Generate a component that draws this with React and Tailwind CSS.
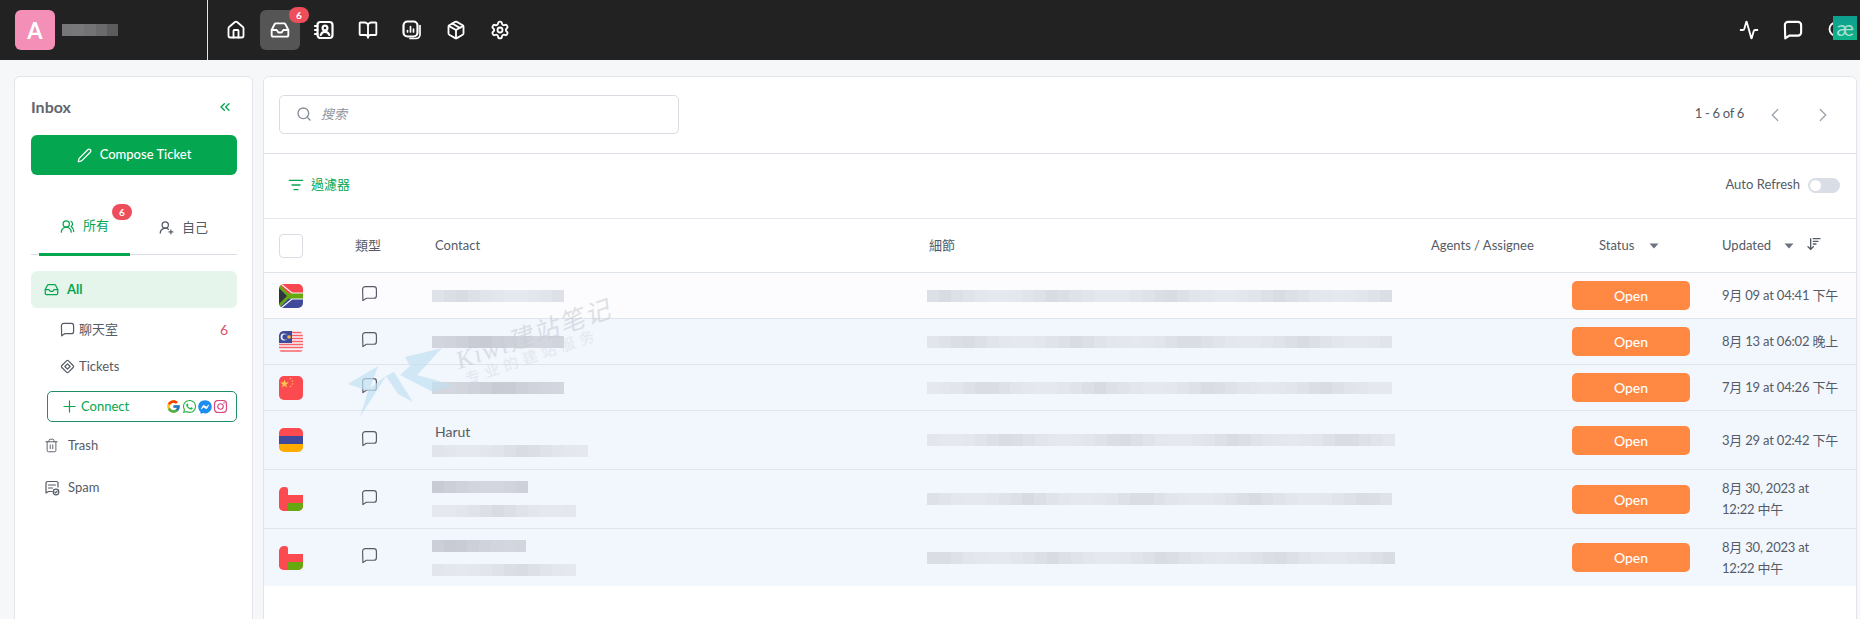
import {
  Activity, ArrowDownWideNarrow, BookOpen, ChevronLeft, ChevronRight, ChevronsLeft, House, Inbox,
  ListFilter, Package, Pen, Plus, Search, Settings, Trash2, UserRoundPlus, UsersRound,
} from 'lucide-react'
import { FaFacebookMessenger, FaInstagram, FaWhatsapp } from 'react-icons/fa'
import { FcGoogle } from 'react-icons/fc'

const ChatIcon = ({ size = 16, strokeWidth = 1.5 }) => (
  <svg width={size} height={size} viewBox="0 0 16 16" fill="none" stroke="currentColor" strokeWidth={strokeWidth} strokeLinejoin="round">
    <path d="M4 1.500h8a2.500 2.500 0 0 1 2.500 2.500v6a2.500 2.500 0 0 1-2.500 2.500H5L1.800 14.700 1.500 4A2.500 2.500 0 0 1 4 1.500z" />
  </svg>
)

const ContactIcon = () => (
  <svg width="20" height="20" viewBox="0 0 20 20" fill="none" stroke="currentColor" strokeWidth="2.200" strokeLinecap="round" strokeLinejoin="round">
    <rect x="3.500" y="2" width="15" height="16" rx="3" />
    <circle cx="11" cy="8" r="2.400" />
    <path d="M6.800 15c.6-2.200 2.200-3.200 4.200-3.200s3.600 1 4.200 3.200M1 6h2.500M1 10h2.500M1 14h2.500" />
  </svg>
)

const ReportIcon = () => (
  <svg width="20" height="20" viewBox="0 0 20 20" fill="none" stroke="currentColor" strokeWidth="2.200" strokeLinecap="round" strokeLinejoin="round">
    <rect x="1.500" y="1.500" width="14" height="15" rx="4" />
    <path d="M18 5.500v9a4 4 0 0 1-4 4H8M5.500 12v-1.500M8.500 12V6.500M11.500 12V9" strokeWidth="1.700" />
  </svg>
)

const TicketIcon = () => (
  <svg width="15" height="15" viewBox="0 0 16 16" fill="none" stroke="currentColor" strokeWidth="1.300" strokeLinejoin="round">
    <rect x="3" y="3" width="10" height="10" rx="1.500" transform="rotate(45 8 8)" />
    <rect x="6" y="6" width="4" height="4" transform="rotate(45 8 8)" />
  </svg>
)

const SpamIcon = () => (
  <svg width="16" height="16" viewBox="0 0 16 16" fill="none" stroke="currentColor" strokeWidth="1.200" strokeLinecap="round" strokeLinejoin="round">
    <path d="M8 11.500H4.500L2 13V3a1.500 1.500 0 0 1 1.500-1.500h9A1.500 1.500 0 0 1 14 3v4" />
    <path d="M4.500 5h7M4.500 8h4" />
    <circle cx="12" cy="12" r="2.800" />
    <path d="M10.800 12l.9.9 1.500-1.700" />
  </svg>
)

const Caret = () => (
  <svg width="10" height="6" viewBox="0 0 10 6" className="text-[#6b7280]" fill="currentColor">
    <path d="M0.500 0.500h9L5 5.500z" />
  </svg>
)

const flags = {
  za: (
    <svg viewBox="0 0 24 24" className="w-full h-full">
      <rect width="24" height="12" fill="#f9454d" />
      <rect y="12" width="24" height="12" fill="#3f4a9c" />
      <path d="M0 0l12 12L0 24z" fill="#66a80f" />
      <rect x="10" y="9" width="14" height="6" fill="#66a80f" />
      <path d="M0 4l8 8-8 8z" fill="#2f3640" />
      <path d="M2 0l11 9h11M2 24l11-9h11" stroke="#f4f5f7" strokeWidth="1.200" fill="none" />
    </svg>
  ),
  my: (
    <svg viewBox="0 0 24 22" className="w-full h-full">
      <rect width="24" height="22" fill="#f4f6fb" />
      <path d="M0 1.500h24M0 4.500h24M0 7.500h24M0 10.500h24M0 13.500h24M0 16.500h24M0 20h24" stroke="#f9646a" strokeWidth="1.600" />
      <rect width="13" height="12" fill="#3f4a9c" />
      <circle cx="5" cy="6" r="3.400" fill="#f4f5f7" />
      <circle cx="6.200" cy="6" r="2.800" fill="#3f4a9c" />
      <circle cx="10" cy="6" r="1.800" fill="#f6b73c" />
    </svg>
  ),
  cn: (
    <svg viewBox="0 0 24 24" className="w-full h-full">
      <rect width="24" height="24" fill="#fb4a50" />
      <path d="M5.500 3.500l1.100 3 3.100.1-2.500 1.900.9 3-2.600-1.800-2.600 1.800.9-3L1.300 6.600l3.100-.1z" fill="#f9c74f" />
      <g fill="#f9b15a">
        <circle cx="11.500" cy="2.500" r=".8" />
        <circle cx="13.500" cy="5" r=".8" />
        <circle cx="13.500" cy="8" r=".8" />
        <circle cx="11.500" cy="10.500" r=".8" />
      </g>
    </svg>
  ),
  am: (
    <svg viewBox="0 0 24 24" className="w-full h-full">
      <rect width="24" height="8" fill="#fb4a50" />
      <rect y="8" width="24" height="8" fill="#3f4a9c" />
      <rect y="16" width="24" height="8" fill="#ffab00" />
    </svg>
  ),
  om: (
    <svg viewBox="0 0 24 24" className="w-full h-full">
      <rect width="24" height="8" fill="#f2f6fd" />
      <rect width="24" height="24" y="8" fill="#fb4a50" />
      <rect x="9" y="16" width="15" height="8" fill="#66a80f" />
      <rect width="9" height="24" fill="#fb4a50" rx="3" />
    </svg>
  ),
}

// pixelated grey strip standing in for the redacted text
function Blur({ width, seed = 1, tone = 'light', className = '' }) {
  const base = { light: [216, 219, 226], mid: [198, 201, 209], dark: [70, 70, 72] }[tone]
  const cells = []
  for (let i = 0; i < Math.ceil(width / 12); i++) {
    const n = Math.round(Math.abs(Math.sin(seed * 37.1 + i * 12.9)) * (tone === 'dark' ? 50 : 13))
    cells.push(
      <span key={i} className="flex-1 h-full" style={{ backgroundColor: `rgb(${base[0] + n},${base[1] + n},${base[2] + n})` }} />,
    )
  }
  return <div className={`flex h-3 ${className}`} style={{ width }}>{cells}</div>
}

const rows = [
  { flag: 'za', h: 'h-[46px]', bg: 'bg-[#fcfcfe]', fh: 'h-6', contact: [[132, 'light']], detail: 465, date: ['9月 09 at 04:41 下午'] },
  { flag: 'my', h: 'h-[46px]', bg: 'bg-[#f2f6fd]', fh: 'h-[22px]', contact: [[132, 'mid']], detail: 465, date: ['8月 13 at 06:02 晚上'] },
  { flag: 'cn', h: 'h-[46px]', bg: 'bg-[#f2f6fd]', fh: 'h-6', contact: [[132, 'mid']], detail: 465, date: ['7月 19 at 04:26 下午'] },
  { flag: 'am', h: 'h-[59px]', bg: 'bg-[#f2f6fd]', fh: 'h-6', name: 'Harut', contact: [[156, 'light']], detail: 468, date: ['3月 29 at 02:42 下午'] },
  { flag: 'om', h: 'h-[59px]', bg: 'bg-[#f2f6fd]', fh: 'h-6', contact: [[96, 'mid'], [144, 'light']], detail: 465, date: ['8月 30, 2023 at', '12:22 中午'] },
  { flag: 'om', h: 'h-[57px]', bg: 'bg-[#f2f6fd]', fh: 'h-6', contact: [[94, 'mid'], [144, 'light']], detail: 468, date: ['8月 30, 2023 at', '12:22 中午'], last: true },
]

const navIcons = [
  <House size={20} strokeWidth={2.200} />,
  <Inbox size={20} strokeWidth={2.200} />,
  <ContactIcon />,
  <BookOpen size={20} strokeWidth={2.200} />,
  <ReportIcon />,
  <Package size={20} strokeWidth={2.200} />,
  <Settings size={20} strokeWidth={2.200} />,
]

const tableCols = 'grid grid-cols-[91px_77px_495px_504px_141px_150px_134px] items-center'

export default function App() {
  return (
    <div className="relative h-[619px] overflow-hidden bg-[#f6f7f9] font-['Lato','Noto_Sans_CJK_TC',sans-serif] text-[#555b66]">
      {/* Top bar */}
      <header className="flex h-[60px] bg-[#222222] text-white">
        <div className="flex w-[208px] items-center gap-[7px] border-r border-[#e5e5e5] pl-[15px]">
          <div className="flex h-10 w-10 items-center justify-center rounded-md bg-[#f48fb8] text-[22px] font-bold text-white">A</div>
          <Blur width={56} seed={3} tone="dark" />
        </div>
        <nav className="ml-[6px] flex items-center">
          {navIcons.map((icon, i) => (
            <div key={i} className="relative flex h-[60px] w-11 items-center justify-center">
              {i === 1 && <div className="absolute h-10 w-10 rounded-md bg-[#555555]" />}
              <span className="relative">{icon}</span>
              {i === 1 && (
                <span className="absolute left-[31px] top-[7px] flex h-4 w-5 items-center justify-center rounded-full bg-[#ee4d5b] text-[10px] font-bold text-white">6</span>
              )}
            </div>
          ))}
        </nav>
        <div className="ml-auto flex items-center pr-px">
          <div className="flex h-[60px] w-11 items-center justify-center"><Activity size={20} strokeWidth={2.200} /></div>
          <div className="flex h-[60px] w-11 items-center justify-center"><ChatIcon size={20} strokeWidth={1.700} /></div>
          <div className="flex h-[60px] w-11 items-center justify-center"><Search size={20} strokeWidth={2.200} /></div>
        </div>
      </header>

      <main className="flex h-[559px] gap-[10px] overflow-hidden pl-[14px] pr-[3px] pt-4">
        {/* Sidebar */}
        <aside className="h-[600px] w-[239px] shrink-0 rounded-t-md border border-[#e3e5ea] bg-white pl-[16px] pr-[15px] pt-[18px]">
          <div className="flex h-6 items-center justify-between">
            <span className="text-[16px] font-bold text-[#62666e]">Inbox</span>
            <ChevronsLeft size={16} className="mr-1 text-[#05a650]" />
          </div>
          <button className="mt-4 flex h-10 w-full items-center justify-center gap-2 rounded-md bg-[#05a650] text-[13px] font-medium text-white">
            <Pen size={15} />
            Compose Ticket
          </button>
          <div className="mt-[30px] flex h-[50px] border-b border-[#d9dce2] text-[13px]">
            <div className="relative ml-2 flex h-[51px] w-[91px] items-center justify-center gap-2 border-b-[3px] border-[#05a650] pb-[6px] text-[#05a650]">
              <UsersRound size={15} />
              所有
              <span className="absolute left-[73px] top-[-1px] flex h-4 w-5 items-center justify-center rounded-full bg-[#ee4d5b] text-[10px] font-bold text-white">6</span>
            </div>
            <div className="flex h-[50px] flex-1 items-center justify-center gap-2 pb-[5px]">
              <UserRoundPlus size={15} />
              自己
            </div>
          </div>
          <div className="mt-4 flex h-[37px] items-center gap-[8px] rounded-md bg-[#e6f5ec] pl-[13px] text-[13px] font-bold text-[#05a650]">
            <Inbox size={15} />
            All
          </div>
          <div className="mt-[3px] flex h-[37px] items-center gap-[4px] pl-[29px] pr-[9px] text-[13px]">
            <ChatIcon size={15} strokeWidth={1.300} />
            聊天室
            <span className="ml-auto text-[14px] text-[#d9506d]">6</span>
          </div>
          <div className="flex h-[37px] items-center gap-[4px] pl-[29px] text-[13px]">
            <TicketIcon />
            Tickets
          </div>
          <div className="ml-4 mt-[6px] flex h-[31px] items-center rounded-[5px] border border-[#1f8f63] pl-[12px] pr-[8px] text-[13px] text-[#05a650]">
            <Plus size={19} strokeWidth={1.500} />
            <span className="ml-[2px]">Connect</span>
            <div className="ml-auto flex items-center gap-px">
              <FcGoogle size={15} />
              <FaWhatsapp size={15} className="text-[#2bb24c]" />
              <FaFacebookMessenger size={14} className="text-[#1c8ef0]" />
              <FaInstagram size={15} className="text-[#d6457e]" />
            </div>
          </div>
          <div className="mt-[5px] flex h-[37px] items-center gap-[9px] pl-[13px] text-[13px]">
            <Trash2 size={15} strokeWidth={1.500} />
            Trash
          </div>
          <div className="mt-[5px] flex h-[37px] items-center gap-[8px] pl-[13px] text-[13px]">
            <SpamIcon />
            Spam
          </div>
        </aside>

        {/* Ticket list */}
        <section className="h-[600px] flex-1 rounded-t-md border border-[#e3e5ea] bg-white">
          <div className="flex h-[77px] items-center border-b border-[#dfe3ea] pb-[2px] pl-[15px] pr-[22px]">
            <div className="flex h-[39px] w-[400px] items-center gap-[9px] rounded-[5px] border border-[#d9dce2] pl-[16px]">
              <Search size={16} className="text-[#868c96]" />
              <span className="pt-px text-[13px] italic text-[#8d929b]">搜索</span>
            </div>
            <span className="ml-auto text-[13px] tracking-[-0.3px]">1 - 6 of 6</span>
            <ChevronLeft size={22} strokeWidth={1.300} className="ml-[20px] mt-[2px] text-[#9aa0aa]" />
            <ChevronRight size={22} strokeWidth={1.300} className="ml-[26px] mt-[2px] text-[#9aa0aa]" />
          </div>
          <div className="flex h-[65px] items-center border-b border-[#e3e6ec] pb-[2px] pl-6 pr-4">
            <ListFilter size={16} className="text-[#05a650]" />
            <span className="ml-[7px] text-[13px] text-[#05a650]">過濾器</span>
            <span className="ml-auto text-[13px]">Auto Refresh</span>
            <div className="ml-2 flex h-[15px] w-8 items-center rounded-full bg-[#d9dde6] pl-[2px]">
              <span className="h-[11px] w-[11px] rounded-full bg-white" />
            </div>
          </div>
          <div className={`${tableCols} h-[54px] border-b border-[#dfe3ea] text-[13px]`}>
            <div className="pl-[15px]"><div className="h-6 w-6 rounded border border-[#d9dce2]" /></div>
            <div>類型</div>
            <div className="pl-[3px]">Contact</div>
            <div className="pl-[2px]">細節</div>
            <div>Agents / Assignee</div>
            <div className="flex items-center pl-[27px]">Status<span className="ml-[15px]"><Caret /></span></div>
            <div className="flex items-center">
              Updated
              <span className="ml-[13px]"><Caret /></span>
              <ArrowDownWideNarrow size={16} className="ml-[12px] -mt-1" />
            </div>
          </div>
          {rows.map((r, i) => (
            <div key={i} className={`${tableCols} ${r.h} ${r.bg} ${r.last ? '' : 'border-b border-[#dfe3ea]'}`}>
              <div className="pl-[15px]">
                <div className={`w-6 ${r.fh} overflow-hidden rounded-[5px]`}>{flags[r.flag]}</div>
              </div>
              <div className="pl-[6px] -mt-1"><ChatIcon size={17} strokeWidth={1.100} /></div>
              <div className="flex flex-col gap-3">
                {r.name && <div className="-mb-[9px] -mt-[2px] pl-[3px] text-[14px] leading-5">{r.name}</div>}
                {r.contact.map(([w, tone], j) => <Blur key={j} width={w} tone={tone} seed={i + j * 3 + 1} />)}
              </div>
              <div><Blur width={r.detail} seed={i + 11} /></div>
              <div />
              <div><div className="flex h-[29px] w-[118px] items-center justify-center rounded-[5px] bg-[#ff8843] text-[14px] font-medium text-white">Open</div></div>
              <div className="text-[13px] leading-[21px] tracking-[-0.2px]">
                {r.date.map((d) => <div key={d} className="whitespace-nowrap">{d}</div>)}
              </div>
            </div>
          ))}
        </section>
      </main>

      {/* Translate extension badge over the top bar */}
      <div className="absolute left-[1833px] top-4 flex h-6 w-6 items-center justify-center bg-gradient-to-b from-[#0f9d8f] to-[#0fb488] text-[22px] leading-none text-[#a9e0d4]">æ</div>

      {/* Site watermark over the list */}
      <div className="pointer-events-none absolute left-[348px] top-[346px]">
        <svg width="110" height="74" viewBox="0 0 110 74" fill="#c3e1f2" opacity="0.7">
          <path d="M0 38l30-18-8 22 16-12-26 41 8-26z" />
          <path d="M38 30l8-4 19 30-15-8z" />
          <path d="M57 11l37-9-25 27 36 10-20 7-33-17 10-9z" />
        </svg>
      </div>
      <div className="pointer-events-none absolute left-[452px] top-[316px] -rotate-[19deg] whitespace-nowrap font-['Liberation_Serif','Noto_Sans_CJK_SC',serif] text-[25px] italic tracking-[2px] text-[#c9ced6] opacity-60">
        Kiwi建站笔记
      </div>
      <div className="pointer-events-none absolute left-[462px] top-[345px] -rotate-[19deg] whitespace-nowrap text-[15px] tracking-[5px] text-[#d5dae2] opacity-50">
        专业的建站服务
      </div>
    </div>
  )
}
